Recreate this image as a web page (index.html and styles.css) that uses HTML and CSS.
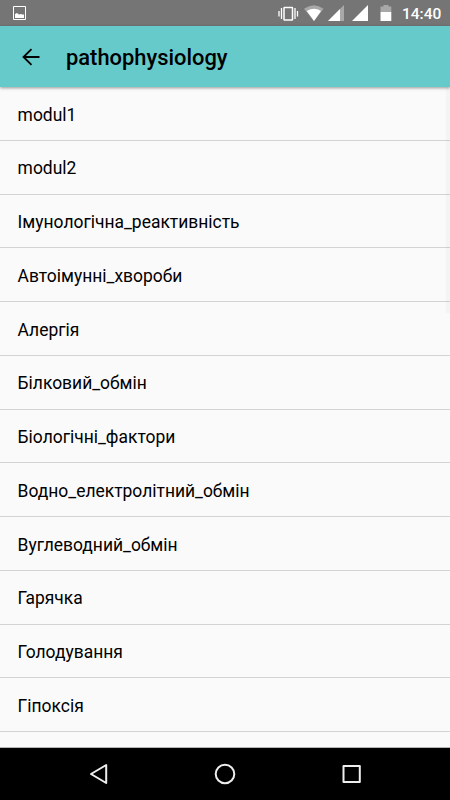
FILE: index.html
```html
<!DOCTYPE html>
<html lang="uk">
<head>
<meta charset="utf-8">
<title>pathophysiology</title>
<link rel="stylesheet" href="styles.css">
</head>
<body>
<div class="screen">
  <header class="status">
    <svg class="picture" viewBox="0 0 14 14"><path fill="none" stroke="#fff" stroke-width="1" d="M.5 .5H12.500V13.500H.5Z"/><path fill="#fff" d="M2 12V8L4 7L6 8.500L8 8L9 8.500L11 8.500V12Z"/></svg>
    <svg class="signals" viewBox="276 0 118 26">
      <g fill="none" stroke="#fff"><rect stroke-width="1.500" x="284" y="7.500" width="8.500" height="12.500" rx=".5"/><path stroke-width="1.300" d="M281.500 8V19M295 8V19M279 11V16.500M297.500 11V16.500"/></g>
      <path fill="#a8a8a8" d="M304 8.800Q314 1.500 323.500 8.800L314 21Z"/><path fill="#fff" d="M306.800 11Q314 6.500 321 11L314 21Z"/>
      <path fill="#a8a8a8" d="M328 21L344 5V21Z"/><path fill="#fff" d="M328 21L340 9V21Z"/>
      <path fill="#fff" d="M352 21L368 5V21Z"/>
      <path fill="#a8a8a8" d="M380.500 6.500H383.500V5H388.500V6.500H391.300V12H380.500Z"/><path fill="#fff" d="M380.500 12H391.300V21H380.500Z"/>
    </svg>
    <time class="clock">14:40</time>
  </header>
  <div class="appbar">
    <svg class="back" viewBox="0 0 18 18"><path fill="none" stroke="#000" stroke-width="1.800" d="M17.500 9H2M9.500 1.200L1.500 9L9.500 16.800"/></svg>
    <h1 class="title">pathophysiology</h1>
  </div>
  <ul class="list">
    <li>modul1</li><li>modul2</li><li>Імунологічна_реактивність</li><li>Автоімунні_хвороби</li><li>Алергія</li><li>Білковий_обмін</li><li>Біологічні_фактори</li><li>Водно_електролітний_обмін</li><li>Вуглеводний_обмін</li><li>Гарячка</li><li>Голодування</li><li>Гіпоксія</li><li></li>
  </ul>
  <nav class="nav">
    <svg viewBox="0 0 24 24"><path d="M20.200 3V21L5 12Z"/></svg>
    <svg viewBox="0 0 24 24"><circle cx="12" cy="12" r="9.300"/></svg>
    <svg viewBox="0 0 24 24"><path d="M3.500 4H19.800V20H3.500Z"/></svg>
  </nav>
</div>
</body>
</html>
```
FILE: styles.css
```css
* { box-sizing: border-box; }
body { margin: 0; font-family: Roboto, sans-serif; color: #000; }
.screen { width: 450px; height: 800px; display: flex; flex-direction: column; overflow: hidden; background: #fafafa; }
.status { height: 26px; flex: none; background: #757575; display: flex; align-items: center; color: #fff; padding: 0 9px 0 13px; }
.picture { width: 14px; height: 14px; }
.signals { width: 118px; height: 26px; margin-left: auto; }
.clock { width: 39px; margin-left: 8px; font-size: 15.500px; font-weight: 500; line-height: 26px; padding-top: 1px; white-space: nowrap; }
.appbar { height: 61px; flex: none; background: #66c9ca; display: flex; align-items: center; padding-left: 22px; box-shadow: 0 1px 3px #0006; z-index: 1; }
.back { width: 18px; height: 18px; }
.title { margin: 2px 0 0 26px; font-size: 21.900px; font-weight: 500; }
.list { position: relative; list-style: none; margin: 0; padding: 0; flex: 1; min-height: 0; overflow: hidden; border-bottom: 1px solid #b5b5b5; }
.list::after { content: ""; position: absolute; top: 0; right: 0; width: 4px; height: 226px; background: #00000006; }
.list li { height: 53.780px; padding: 1.500px 17.600px 0; font-size: 17.460px; line-height: 52px; border-bottom: 1px solid #d3d3d3; }
.nav { height: 52px; flex: none; background: #000; display: flex; justify-content: space-between; align-items: center; padding: 0 86px; }
.nav svg { width: 24px; height: 24px; fill: none; stroke: #eee; stroke-width: 2; stroke-linejoin: round; }
```
